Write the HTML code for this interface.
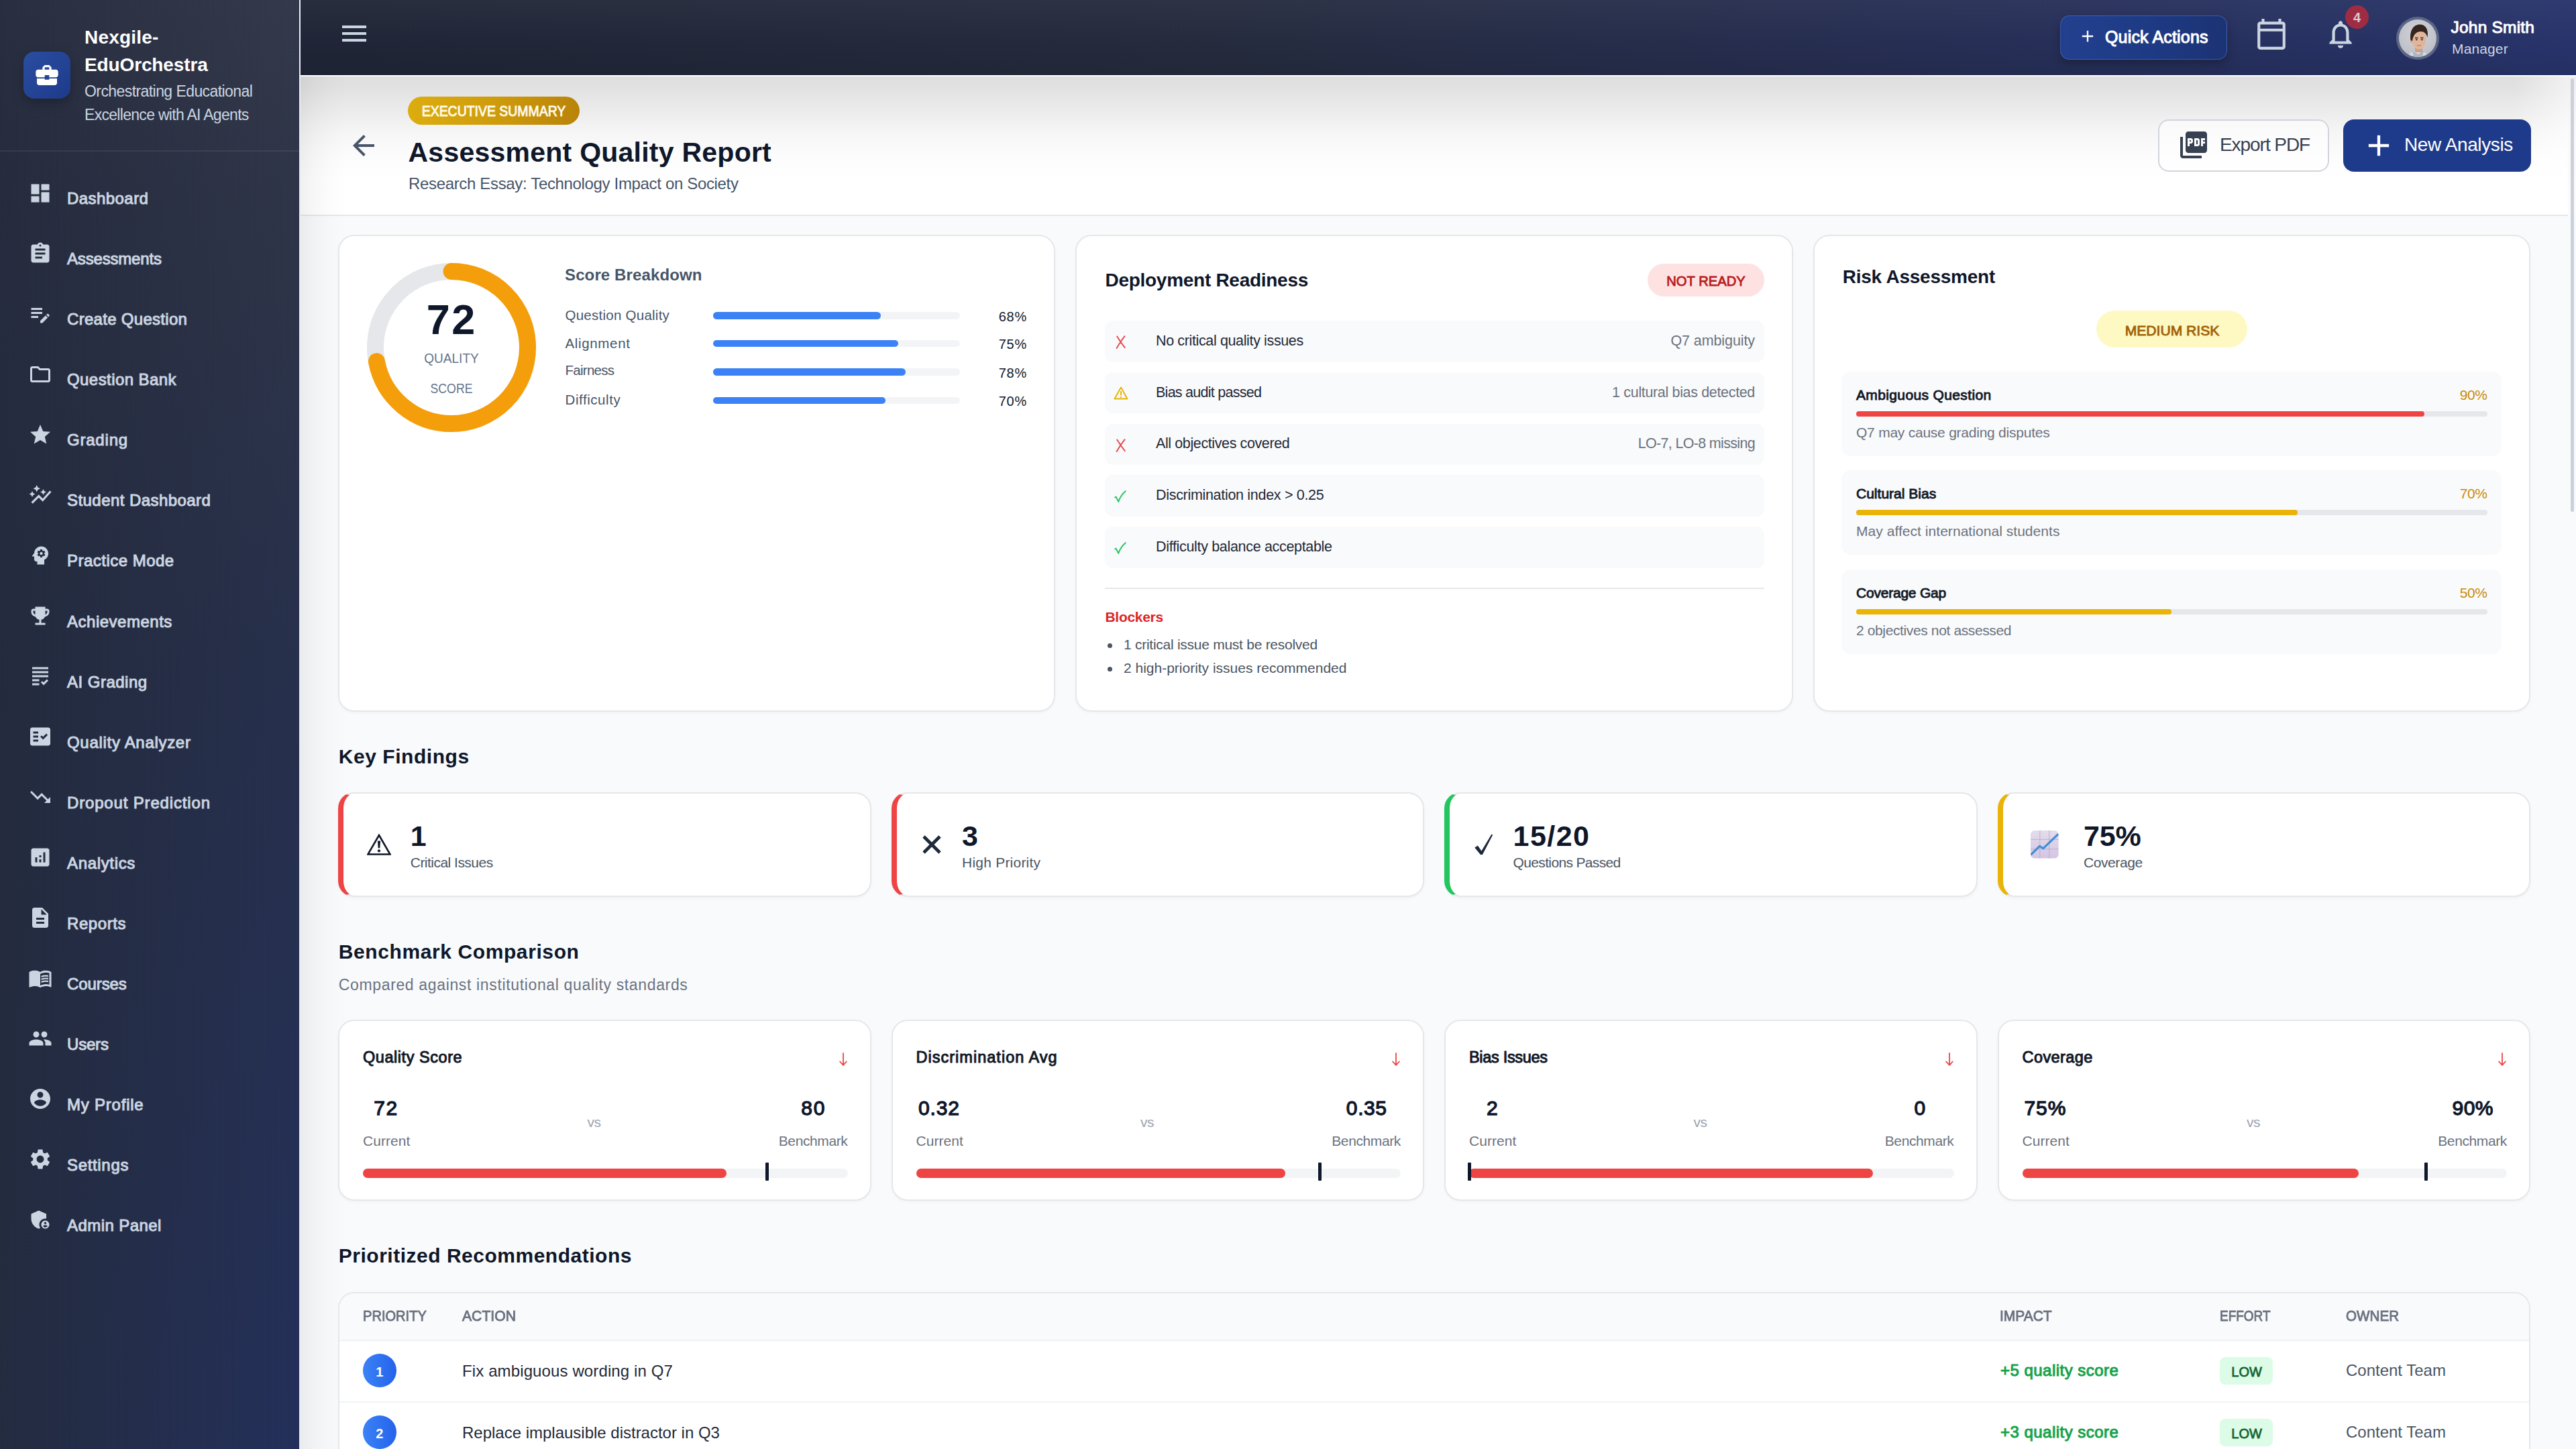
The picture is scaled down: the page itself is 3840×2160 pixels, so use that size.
<!DOCTYPE html><html><head><meta charset='utf-8'><title>Assessment Quality Report</title><style>
html,body{margin:0;padding:0;width:3840px;height:2160px;overflow:hidden;background:#f8fafc;}
body{position:relative;font-family:"Liberation Sans",sans-serif;}
.t{position:absolute;white-space:nowrap;line-height:1;}
.b{position:absolute;display:block;}
</style>
</head><body>
<div class="b" style="left:448.00px;top:114.00px;width:3380.00px;height:206.00px;background:#ffffff;"></div>
<div class="b" style="left:448.00px;top:320.00px;width:3380.00px;height:2.00px;background:#e5e7eb;"></div>
<div class="b" style="left:448.00px;top:114.00px;width:3380.00px;height:160.00px;background:linear-gradient(180deg,rgba(0,0,0,0.13) 0px,rgba(0,0,0,0.113) 19px,rgba(0,0,0,0.075) 52px,rgba(0,0,0,0.035) 85px,rgba(0,0,0,0.012) 118px,rgba(0,0,0,0) 155px);-webkit-mask-image:linear-gradient(90deg,#000 0px,#000 3300px,rgba(0,0,0,0.45) 3380px);mask-image:linear-gradient(90deg,#000 0px,#000 3300px,rgba(0,0,0,0.45) 3380px);"></div>
<div class="b" style="left:3828.00px;top:114.00px;width:12.00px;height:208.00px;background:linear-gradient(180deg,#efefef 0px,#f9f9f9 80px,#fbfbfb 208px);"></div>
<div class="b" style="left:448.00px;top:114.00px;width:70.00px;height:2046.00px;background:linear-gradient(90deg,rgba(0,0,0,0.06) 0px,rgba(0,0,0,0.03) 20px,rgba(0,0,0,0.01) 45px,rgba(0,0,0,0) 70px);"></div>
<svg class="b" style="left:518.00px;top:192.50px" width="48" height="48" viewBox="0 0 24 24"><path fill="#475569" d="M20 11H7.83l5.59-5.59L12 4l-8 8 8 8 1.41-1.41L7.83 13H20v-2z"/></svg>
<div class="b" style="left:608.00px;top:144.00px;width:256.00px;height:42.00px;border-radius:21px;background:linear-gradient(90deg,#dcad0e 0%,#cf9c0c 50%,#b98309 100%);"></div>
<div id="t1" class="t" style="top:156.30px;font-size:21.5px;font-weight:400;-webkit-text-stroke:0.90px #fffbeb;color:#fffbeb;left:736.00px;transform-origin:0 0;transform:scaleX(0.9040) translateX(-50%);">EXECUTIVE SUMMARY</div>
<div id="t2" class="t" style="top:207.29px;font-size:41px;font-weight:700;color:#0f172a;letter-spacing:0.243px;left:608.50px;">Assessment Quality Report</div>
<div id="t3" class="t" style="top:261.68px;font-size:24px;font-weight:400;color:#475569;letter-spacing:-0.339px;left:609.00px;">Research Essay: Technology Impact on Society</div>
<div class="b" style="left:3216.50px;top:178.00px;width:255.00px;height:78.00px;box-sizing:border-box;border-radius:16px;border:2px solid #d1d5db;background:rgba(255,255,255,0.6);"></div>
<svg class="b" style="left:3246.00px;top:191.75px" width="48" height="48" viewBox="0 0 24 24"><path fill="#374151" d="M20 2H8c-1.1 0-2 .9-2 2v12c0 1.1.9 2 2 2h12c1.1 0 2-.9 2-2V4c0-1.1-.9-2-2-2zm-8.5 7.5c0 .83-.67 1.5-1.5 1.5H9v2H7.5V7H10c.83 0 1.5.67 1.5 1.5v1zm5 2c0 .83-.67 1.5-1.5 1.5h-2.5V7H15c.83 0 1.5.67 1.5 1.5v3zm4-3H19v1h1.5V11H19v2h-1.5V7h3v1.5zM9 9.5h1v-1H9v1zM4 6H2v14c0 1.1.9 2 2 2h14v-2H4V6zm10 5.5h1v-3h-1v3z"/></svg>
<div id="t4" class="t" style="top:202.29px;font-size:28px;font-weight:400;color:#374151;letter-spacing:-1.053px;left:3309.00px;">Export PDF</div>
<div class="b" style="left:3493.00px;top:178.00px;width:280.00px;height:78.00px;border-radius:16px;background:#1e3a8a;"></div>
<svg class="b" style="left:3519.50px;top:190.50px" width="52" height="52" viewBox="0 0 24 24"><path fill="#ffffff" d="M19 13h-6v6h-2v-6H5v-2h6V5h2v6h6v2z"/></svg>
<div id="t5" class="t" style="top:202.29px;font-size:28px;font-weight:400;color:#ffffff;letter-spacing:-0.388px;left:3584.00px;">New Analysis</div>
<div class="b" style="left:504.00px;top:349.50px;width:1069.33px;height:711.00px;box-sizing:border-box;border-radius:24px;border:2px solid #e5e7eb;background:#ffffff;box-shadow:0 2px 4px rgba(0,0,0,0.03);"></div>
<div class="b" style="left:1603.33px;top:349.50px;width:1069.33px;height:711.00px;box-sizing:border-box;border-radius:24px;border:2px solid #e5e7eb;background:#ffffff;box-shadow:0 2px 4px rgba(0,0,0,0.03);"></div>
<div class="b" style="left:2702.67px;top:349.50px;width:1069.33px;height:711.00px;box-sizing:border-box;border-radius:24px;border:2px solid #e5e7eb;background:#ffffff;box-shadow:0 2px 4px rgba(0,0,0,0.03);"></div>
<svg class="b" style="left:547.25px;top:392.25px" width="252.00" height="252.00" viewBox="0 0 252.00 252.00">
<circle cx="126.00" cy="126.00" r="113.5" fill="none" stroke="#e5e7eb" stroke-width="25"/>
<circle cx="126.00" cy="126.00" r="113.5" fill="none" stroke="#f59e0b" stroke-width="25" stroke-linecap="round" stroke-dasharray="513.46 713.14" transform="rotate(-90 126.00 126.00)"/>
</svg>
<div id="t6" class="t" style="top:444.66px;font-size:63px;font-weight:700;color:#0f172a;letter-spacing:2.464px;left:673.25px;transform-origin:0 0;transform: translateX(-50%);">72</div>
<div id="t7" class="t" style="top:523.22px;font-size:21px;font-weight:400;color:#64748b;left:673.25px;transform-origin:0 0;transform:scaleX(0.9072) translateX(-50%);">QUALITY</div>
<div id="t8" class="t" style="top:568.22px;font-size:21px;font-weight:400;color:#64748b;left:673.25px;transform-origin:0 0;transform:scaleX(0.8424) translateX(-50%);">SCORE</div>
<div id="t9" class="t" style="top:397.68px;font-size:24px;font-weight:700;color:#475569;letter-spacing:0.120px;left:842.00px;">Score Breakdown</div>
<div id="t10" class="t" style="top:459.54px;font-size:20.5px;font-weight:400;color:#475569;letter-spacing:0.255px;left:842.50px;">Question Quality</div>
<div class="b" style="left:1062.50px;top:465.00px;width:368.00px;height:10.50px;border-radius:6px;background:#f3f4f6;"></div>
<div class="b" style="left:1062.50px;top:465.00px;width:250.24px;height:10.50px;border-radius:6px;background:#3b82f6;"></div>
<div id="t11" class="t" style="top:461.57px;font-size:20px;font-weight:400;color:#111827;letter-spacing:0.781px;left:1531.00px;transform-origin:0 0;transform: translateX(-100%);">68%</div>
<div id="t12" class="t" style="top:501.64px;font-size:20.5px;font-weight:400;color:#475569;letter-spacing:0.653px;left:842.50px;">Alignment</div>
<div class="b" style="left:1062.50px;top:506.50px;width:368.00px;height:10.50px;border-radius:6px;background:#f3f4f6;"></div>
<div class="b" style="left:1062.50px;top:506.50px;width:276.00px;height:10.50px;border-radius:6px;background:#3b82f6;"></div>
<div id="t13" class="t" style="top:503.07px;font-size:20px;font-weight:400;color:#111827;letter-spacing:0.781px;left:1531.00px;transform-origin:0 0;transform: translateX(-100%);">75%</div>
<div id="t14" class="t" style="top:542.39px;font-size:20.5px;font-weight:400;color:#475569;letter-spacing:-0.726px;left:842.50px;">Fairness</div>
<div class="b" style="left:1062.50px;top:549.00px;width:368.00px;height:10.50px;border-radius:6px;background:#f3f4f6;"></div>
<div class="b" style="left:1062.50px;top:549.00px;width:287.04px;height:10.50px;border-radius:6px;background:#3b82f6;"></div>
<div id="t15" class="t" style="top:545.57px;font-size:20px;font-weight:400;color:#111827;letter-spacing:0.781px;left:1531.00px;transform-origin:0 0;transform: translateX(-100%);">78%</div>
<div id="t16" class="t" style="top:585.64px;font-size:20.5px;font-weight:400;color:#475569;letter-spacing:0.572px;left:842.50px;">Difficulty</div>
<div class="b" style="left:1062.50px;top:591.50px;width:368.00px;height:10.50px;border-radius:6px;background:#f3f4f6;"></div>
<div class="b" style="left:1062.50px;top:591.50px;width:257.60px;height:10.50px;border-radius:6px;background:#3b82f6;"></div>
<div id="t17" class="t" style="top:588.07px;font-size:20px;font-weight:400;color:#111827;letter-spacing:0.781px;left:1531.00px;transform-origin:0 0;transform: translateX(-100%);">70%</div>
<div id="t18" class="t" style="top:404.29px;font-size:28px;font-weight:700;color:#0f172a;letter-spacing:-0.282px;left:1647.50px;">Deployment Readiness</div>
<div class="b" style="left:2456.00px;top:392.50px;width:174.00px;height:49.00px;border-radius:25px;background:#fee2e2;"></div>
<div id="t19" class="t" style="top:408.22px;font-size:21px;font-weight:400;-webkit-text-stroke:0.88px #b91c1c;color:#b91c1c;left:2543.00px;transform-origin:0 0;transform:scaleX(0.9630) translateX(-50%);">NOT READY</div>
<div class="b" style="left:1647.00px;top:478.00px;width:983.00px;height:61.50px;border-radius:12px;background:#f9fafb;"></div>
<svg class="b" style="left:1662.5px;top:500.0px" width="16" height="20" viewBox="0 0 16 20"><path d="M2.2 1.5 C5 6 9 12 13.8 18.2 M13.6 1.2 C9.5 6.5 5.5 12 1.6 19" fill="none" stroke="#e5484d" stroke-width="1.9" stroke-linecap="round"/></svg>
<div id="t20" class="t" style="top:497.80px;font-size:21.5px;font-weight:400;color:#1f2937;letter-spacing:-0.368px;left:1723.00px;">No critical quality issues</div>
<div id="t21" class="t" style="top:497.80px;font-size:21.5px;font-weight:400;color:#6b7280;letter-spacing:-0.088px;left:2616.00px;transform-origin:0 0;transform: translateX(-100%);">Q7 ambiguity</div>
<div class="b" style="left:1647.00px;top:554.75px;width:983.00px;height:61.50px;border-radius:12px;background:#f9fafb;"></div>
<svg class="b" style="left:1660px;top:576.0px" width="22" height="20" viewBox="0 0 22 20"><path d="M11 1.5 L20.5 18.5 L1.5 18.5 Z" fill="none" stroke="#eab308" stroke-width="2" stroke-linejoin="round"/><rect x="10" y="7" width="2" height="6.5" fill="#eab308"/><rect x="10" y="15" width="2" height="2" fill="#eab308"/></svg>
<div id="t22" class="t" style="top:574.55px;font-size:21.5px;font-weight:400;color:#1f2937;letter-spacing:-0.735px;left:1723.00px;">Bias audit passed</div>
<div id="t23" class="t" style="top:574.55px;font-size:21.5px;font-weight:400;color:#6b7280;letter-spacing:-0.343px;left:2616.00px;transform-origin:0 0;transform: translateX(-100%);">1 cultural bias detected</div>
<div class="b" style="left:1647.00px;top:631.50px;width:983.00px;height:61.50px;border-radius:12px;background:#f9fafb;"></div>
<svg class="b" style="left:1662.5px;top:653.5px" width="16" height="20" viewBox="0 0 16 20"><path d="M2.2 1.5 C5 6 9 12 13.8 18.2 M13.6 1.2 C9.5 6.5 5.5 12 1.6 19" fill="none" stroke="#e5484d" stroke-width="1.9" stroke-linecap="round"/></svg>
<div id="t24" class="t" style="top:651.30px;font-size:21.5px;font-weight:400;color:#1f2937;letter-spacing:-0.392px;left:1723.00px;">All objectives covered</div>
<div id="t25" class="t" style="top:651.30px;font-size:21.5px;font-weight:400;color:#6b7280;letter-spacing:-0.672px;left:2616.00px;transform-origin:0 0;transform: translateX(-100%);">LO-7, LO-8 missing</div>
<div class="b" style="left:1647.00px;top:708.25px;width:983.00px;height:61.50px;border-radius:12px;background:#f9fafb;"></div>
<svg class="b" style="left:1661px;top:730.75px" width="18" height="19" viewBox="0 0 18 19"><path d="M1.2 10.5 L2.6 9.6 L6.2 16.8 C8.5 10.5 12 5 16.8 1.2" fill="none" stroke="#22c55e" stroke-width="1.9" stroke-linecap="round" stroke-linejoin="round"/></svg>
<div id="t26" class="t" style="top:728.05px;font-size:21.5px;font-weight:400;color:#1f2937;letter-spacing:-0.308px;left:1723.00px;">Discrimination index &gt; 0.25</div>
<div class="b" style="left:1647.00px;top:785.00px;width:983.00px;height:61.50px;border-radius:12px;background:#f9fafb;"></div>
<svg class="b" style="left:1661px;top:807.5px" width="18" height="19" viewBox="0 0 18 19"><path d="M1.2 10.5 L2.6 9.6 L6.2 16.8 C8.5 10.5 12 5 16.8 1.2" fill="none" stroke="#22c55e" stroke-width="1.9" stroke-linecap="round" stroke-linejoin="round"/></svg>
<div id="t27" class="t" style="top:804.80px;font-size:21.5px;font-weight:400;color:#1f2937;letter-spacing:-0.326px;left:1723.00px;">Difficulty balance acceptable</div>
<div class="b" style="left:1647.00px;top:875.50px;width:983.00px;height:2.00px;background:#e5e7eb;"></div>
<div id="t28" class="t" style="top:909.22px;font-size:21px;font-weight:700;color:#dc2626;letter-spacing:-0.291px;left:1647.50px;">Blockers</div>
<div class="b" style="left:1650.50px;top:958.80px;width:7.00px;height:7.00px;border-radius:50%;background:#4b5563;"></div>
<div class="b" style="left:1650.50px;top:994.00px;width:7.00px;height:7.00px;border-radius:50%;background:#4b5563;"></div>
<div id="t29" class="t" style="top:949.72px;font-size:21px;font-weight:400;color:#4b5563;letter-spacing:-0.264px;left:1675.00px;">1 critical issue must be resolved</div>
<div id="t30" class="t" style="top:985.22px;font-size:21px;font-weight:400;color:#4b5563;letter-spacing:-0.007px;left:1675.00px;">2 high-priority issues recommended</div>
<div id="t31" class="t" style="top:399.29px;font-size:28px;font-weight:700;color:#0f172a;letter-spacing:-0.241px;left:2746.75px;">Risk Assessment</div>
<div class="b" style="left:3125.00px;top:463.00px;width:225.00px;height:55.00px;border-radius:28px;background:#fef9c3;"></div>
<div id="t32" class="t" style="top:482.22px;font-size:21px;font-weight:400;-webkit-text-stroke:0.88px #a16207;color:#a16207;left:3237.50px;transform-origin:0 0;transform:scaleX(1.0048) translateX(-50%);">MEDIUM RISK</div>
<div class="b" style="left:2745.00px;top:554.00px;width:984.00px;height:126.00px;border-radius:14px;background:#f9fafb;"></div>
<div id="t33" class="t" style="top:577.97px;font-size:21px;font-weight:400;-webkit-text-stroke:0.88px #111827;color:#111827;letter-spacing:0.366px;left:2767.00px;">Ambiguous Question</div>
<div id="t34" class="t" style="top:577.97px;font-size:21px;font-weight:400;color:#ca8a04;letter-spacing:-0.377px;left:3707.60px;transform-origin:0 0;transform: translateX(-100%);">90%</div>
<div class="b" style="left:2767.00px;top:613.00px;width:940.60px;height:8.00px;border-radius:4px;background:#e5e7eb;"></div>
<div class="b" style="left:2767.00px;top:613.00px;width:846.54px;height:8.00px;border-radius:4px;background:#ef4444;"></div>
<div id="t35" class="t" style="top:633.97px;font-size:21px;font-weight:400;color:#6b7280;letter-spacing:-0.238px;left:2767.00px;">Q7 may cause grading disputes</div>
<div class="b" style="left:2745.00px;top:701.30px;width:984.00px;height:126.00px;border-radius:14px;background:#f9fafb;"></div>
<div id="t36" class="t" style="top:725.27px;font-size:21px;font-weight:400;-webkit-text-stroke:0.88px #111827;color:#111827;letter-spacing:0.010px;left:2767.00px;">Cultural Bias</div>
<div id="t37" class="t" style="top:725.27px;font-size:21px;font-weight:400;color:#ca8a04;letter-spacing:-0.377px;left:3707.60px;transform-origin:0 0;transform: translateX(-100%);">70%</div>
<div class="b" style="left:2767.00px;top:760.30px;width:940.60px;height:8.00px;border-radius:4px;background:#e5e7eb;"></div>
<div class="b" style="left:2767.00px;top:760.30px;width:658.42px;height:8.00px;border-radius:4px;background:#eab308;"></div>
<div id="t38" class="t" style="top:781.27px;font-size:21px;font-weight:400;color:#6b7280;letter-spacing:0.046px;left:2767.00px;">May affect international students</div>
<div class="b" style="left:2745.00px;top:848.60px;width:984.00px;height:126.00px;border-radius:14px;background:#f9fafb;"></div>
<div id="t39" class="t" style="top:872.57px;font-size:21px;font-weight:400;-webkit-text-stroke:0.88px #111827;color:#111827;letter-spacing:-0.220px;left:2767.00px;">Coverage Gap</div>
<div id="t40" class="t" style="top:872.57px;font-size:21px;font-weight:400;color:#ca8a04;letter-spacing:-0.377px;left:3707.60px;transform-origin:0 0;transform: translateX(-100%);">50%</div>
<div class="b" style="left:2767.00px;top:907.60px;width:940.60px;height:8.00px;border-radius:4px;background:#e5e7eb;"></div>
<div class="b" style="left:2767.00px;top:907.60px;width:470.30px;height:8.00px;border-radius:4px;background:#eab308;"></div>
<div id="t41" class="t" style="top:928.57px;font-size:21px;font-weight:400;color:#6b7280;letter-spacing:-0.375px;left:2767.00px;">2 objectives not assessed</div>
<div id="t42" class="t" style="top:1112.60px;font-size:30px;font-weight:700;color:#0f172a;letter-spacing:0.549px;left:504.75px;">Key Findings</div>
<div class="b" style="left:504.00px;top:1180.50px;width:794.50px;height:156.00px;box-sizing:border-box;border-radius:24px;border:2px solid #e5e7eb;border-left:8px solid #ef4444;background:#ffffff;box-shadow:0 2px 4px rgba(0,0,0,0.04);"></div>
<div id="t43" class="t" style="top:1224.99px;font-size:43px;font-weight:700;color:#0f172a;left:611.75px;">1</div>
<div id="t44" class="t" style="top:1274.72px;font-size:21px;font-weight:400;color:#4b5563;letter-spacing:-0.520px;left:611.75px;">Critical Issues</div>
<div class="b" style="left:1328.50px;top:1180.50px;width:794.50px;height:156.00px;box-sizing:border-box;border-radius:24px;border:2px solid #e5e7eb;border-left:8px solid #ef4444;background:#ffffff;box-shadow:0 2px 4px rgba(0,0,0,0.04);"></div>
<div id="t45" class="t" style="top:1224.99px;font-size:43px;font-weight:700;color:#0f172a;left:1434.00px;">3</div>
<div id="t46" class="t" style="top:1274.72px;font-size:21px;font-weight:400;color:#4b5563;letter-spacing:0.226px;left:1434.00px;">High Priority</div>
<div class="b" style="left:2153.00px;top:1180.50px;width:794.50px;height:156.00px;box-sizing:border-box;border-radius:24px;border:2px solid #e5e7eb;border-left:8px solid #22c55e;background:#ffffff;box-shadow:0 2px 4px rgba(0,0,0,0.04);"></div>
<div id="t47" class="t" style="top:1224.99px;font-size:43px;font-weight:700;color:#0f172a;letter-spacing:1.456px;left:2255.60px;">15/20</div>
<div id="t48" class="t" style="top:1274.72px;font-size:21px;font-weight:400;color:#4b5563;letter-spacing:-0.650px;left:2255.60px;">Questions Passed</div>
<div class="b" style="left:2977.50px;top:1180.50px;width:794.50px;height:156.00px;box-sizing:border-box;border-radius:24px;border:2px solid #e5e7eb;border-left:8px solid #eab308;background:#ffffff;box-shadow:0 2px 4px rgba(0,0,0,0.04);"></div>
<div id="t49" class="t" style="top:1224.99px;font-size:43px;font-weight:700;color:#0f172a;letter-spacing:-0.212px;left:3106.00px;">75%</div>
<div id="t50" class="t" style="top:1274.72px;font-size:21px;font-weight:400;color:#4b5563;letter-spacing:-0.426px;left:3106.00px;">Coverage</div>
<svg class="b" style="left:547px;top:1243px" width="36" height="32" viewBox="0 0 36 32"><path d="M18 2 L34.5 30.5 L1.5 30.5 Z" fill="none" stroke="#111827" stroke-width="2.6" stroke-linejoin="miter"/><path d="M15.9 10.5 h4.2 l-0.8 10.8 h-2.6 Z" fill="#111827"/><circle cx="18" cy="25.3" r="2.1" fill="#111827"/></svg>
<svg class="b" style="left:1373.5px;top:1244px" width="30" height="30" viewBox="0 0 30 30"><path d="M3 3 L27 27 M27 3 L3 27" stroke="#1e293b" stroke-width="4.8" stroke-linecap="butt"/></svg>
<svg class="b" style="left:2197.8px;top:1242.7px" width="27.2" height="31.7" viewBox="0 0 27.2 31.7"><path d="M0.3 20.6 L4.9 17.4 L10.4 25.6 L25.5 0.4 L27.2 1.7 L11.6 31.6 L9.4 31.6 Z" fill="#1e293b"/></svg>
<svg class="b" style="left:3027.4px;top:1238px" width="41.6" height="41.6" viewBox="0 0 42 42">
<defs><linearGradient id="cg" x1="0" y1="0" x2="0" y2="1"><stop offset="0" stop-color="#e4dcec"/><stop offset="1" stop-color="#d3c6e3"/></linearGradient></defs>
<rect x="0" y="0" width="42" height="42" rx="6" fill="url(#cg)"/>
<path d="M14 0 V42 M28 0 V42 M0 13.5 H42 M0 28 H42" stroke="#b9abc9" stroke-width="0.9"/>
<path d="M0.5 36.5 L13.5 23.5 L19 27 L41.5 5.5" fill="none" stroke="#3f8fd6" stroke-width="3.2" stroke-linejoin="round"/>
</svg>
<div id="t51" class="t" style="top:1403.60px;font-size:30px;font-weight:700;color:#0f172a;letter-spacing:0.599px;left:504.75px;">Benchmark Comparison</div>
<div id="t52" class="t" style="top:1456.78px;font-size:23px;font-weight:400;color:#6b7280;letter-spacing:0.647px;left:504.75px;">Compared against institutional quality standards</div>
<div class="b" style="left:504.00px;top:1519.50px;width:794.50px;height:270.00px;box-sizing:border-box;border-radius:24px;border:2px solid #e5e7eb;background:#ffffff;box-shadow:0 2px 4px rgba(0,0,0,0.03);"></div>
<div id="t53" class="t" style="top:1564.60px;font-size:23.5px;font-weight:400;-webkit-text-stroke:0.99px #111827;color:#111827;letter-spacing:0.547px;left:541.00px;">Quality Score</div>
<svg class="b" style="left:1249.5px;top:1568.5px" width="14" height="20" viewBox="0 0 14 20"><path d="M7 1 V18.5 M2.2 13.5 L7 18.8 L11.8 13.5" fill="none" stroke="#ef4444" stroke-width="1.8" stroke-linecap="round" stroke-linejoin="round"/></svg>
<div id="t54" class="t" style="top:1690.22px;font-size:21px;font-weight:400;color:#6b7280;letter-spacing:0.065px;left:541.00px;">Current</div>
<div id="t55" class="t" style="top:1690.22px;font-size:21px;font-weight:400;color:#6b7280;letter-spacing:-0.380px;left:1263.50px;transform-origin:0 0;transform: translateX(-100%);">Benchmark</div>
<div id="t56" class="t" style="top:1637.10px;font-size:30px;font-weight:400;-webkit-text-stroke:1.26px #0f172a;color:#0f172a;letter-spacing:1.528px;left:575.40px;transform-origin:0 0;transform: translateX(-50%);">72</div>
<div id="t57" class="t" style="top:1637.10px;font-size:30px;font-weight:400;-webkit-text-stroke:1.26px #0f172a;color:#0f172a;letter-spacing:1.722px;left:1212.75px;transform-origin:0 0;transform: translateX(-50%);">80</div>
<div id="t58" class="t" style="top:1662.22px;font-size:21px;font-weight:400;color:#9ca3af;letter-spacing:-0.585px;left:885.40px;transform-origin:0 0;transform: translateX(-50%);">vs</div>
<div class="b" style="left:541.00px;top:1741.50px;width:722.50px;height:14.00px;border-radius:7px;background:#f3f4f6;"></div>
<div class="b" style="left:541.00px;top:1741.50px;width:541.88px;height:14.00px;border-radius:7px;background:#ef4444;"></div>
<div class="b" style="left:1140.56px;top:1733.00px;width:5.00px;height:27.00px;background:#0f172a;border-radius:1px;"></div>
<div class="b" style="left:1328.50px;top:1519.50px;width:794.50px;height:270.00px;box-sizing:border-box;border-radius:24px;border:2px solid #e5e7eb;background:#ffffff;box-shadow:0 2px 4px rgba(0,0,0,0.03);"></div>
<div id="t59" class="t" style="top:1564.60px;font-size:23.5px;font-weight:400;-webkit-text-stroke:0.99px #111827;color:#111827;letter-spacing:1.018px;left:1365.50px;">Discrimination Avg</div>
<svg class="b" style="left:2074.0px;top:1568.5px" width="14" height="20" viewBox="0 0 14 20"><path d="M7 1 V18.5 M2.2 13.5 L7 18.8 L11.8 13.5" fill="none" stroke="#ef4444" stroke-width="1.8" stroke-linecap="round" stroke-linejoin="round"/></svg>
<div id="t60" class="t" style="top:1690.22px;font-size:21px;font-weight:400;color:#6b7280;letter-spacing:0.065px;left:1365.50px;">Current</div>
<div id="t61" class="t" style="top:1690.22px;font-size:21px;font-weight:400;color:#6b7280;letter-spacing:-0.380px;left:2088.00px;transform-origin:0 0;transform: translateX(-100%);">Benchmark</div>
<div id="t62" class="t" style="top:1637.10px;font-size:30px;font-weight:400;-webkit-text-stroke:1.26px #0f172a;color:#0f172a;letter-spacing:0.899px;left:1399.90px;transform-origin:0 0;transform: translateX(-50%);">0.32</div>
<div id="t63" class="t" style="top:1637.10px;font-size:30px;font-weight:400;-webkit-text-stroke:1.26px #0f172a;color:#0f172a;letter-spacing:0.600px;left:2037.25px;transform-origin:0 0;transform: translateX(-50%);">0.35</div>
<div id="t64" class="t" style="top:1662.22px;font-size:21px;font-weight:400;color:#9ca3af;letter-spacing:-0.585px;left:1709.90px;transform-origin:0 0;transform: translateX(-50%);">vs</div>
<div class="b" style="left:1365.50px;top:1741.50px;width:722.50px;height:14.00px;border-radius:7px;background:#f3f4f6;"></div>
<div class="b" style="left:1365.50px;top:1741.50px;width:550.54px;height:14.00px;border-radius:7px;background:#ef4444;"></div>
<div class="b" style="left:1965.06px;top:1733.00px;width:5.00px;height:27.00px;background:#0f172a;border-radius:1px;"></div>
<div class="b" style="left:2153.00px;top:1519.50px;width:794.50px;height:270.00px;box-sizing:border-box;border-radius:24px;border:2px solid #e5e7eb;background:#ffffff;box-shadow:0 2px 4px rgba(0,0,0,0.03);"></div>
<div id="t65" class="t" style="top:1564.60px;font-size:23.5px;font-weight:400;-webkit-text-stroke:0.99px #111827;color:#111827;letter-spacing:-0.308px;left:2190.00px;">Bias Issues</div>
<svg class="b" style="left:2898.5px;top:1568.5px" width="14" height="20" viewBox="0 0 14 20"><path d="M7 1 V18.5 M2.2 13.5 L7 18.8 L11.8 13.5" fill="none" stroke="#ef4444" stroke-width="1.8" stroke-linecap="round" stroke-linejoin="round"/></svg>
<div id="t66" class="t" style="top:1690.22px;font-size:21px;font-weight:400;color:#6b7280;letter-spacing:0.065px;left:2190.00px;">Current</div>
<div id="t67" class="t" style="top:1690.22px;font-size:21px;font-weight:400;color:#6b7280;letter-spacing:-0.380px;left:2912.50px;transform-origin:0 0;transform: translateX(-100%);">Benchmark</div>
<div id="t68" class="t" style="top:1637.10px;font-size:30px;font-weight:400;-webkit-text-stroke:1.26px #0f172a;color:#0f172a;left:2224.40px;transform-origin:0 0;transform: translateX(-50%);">2</div>
<div id="t69" class="t" style="top:1637.10px;font-size:30px;font-weight:400;-webkit-text-stroke:1.26px #0f172a;color:#0f172a;left:2861.75px;transform-origin:0 0;transform: translateX(-50%);">0</div>
<div id="t70" class="t" style="top:1662.22px;font-size:21px;font-weight:400;color:#9ca3af;letter-spacing:-0.585px;left:2534.40px;transform-origin:0 0;transform: translateX(-50%);">vs</div>
<div class="b" style="left:2190.00px;top:1741.50px;width:722.50px;height:14.00px;border-radius:7px;background:#f3f4f6;"></div>
<div class="b" style="left:2190.00px;top:1741.50px;width:602.06px;height:14.00px;border-radius:7px;background:#ef4444;"></div>
<div class="b" style="left:2187.50px;top:1733.00px;width:5.00px;height:27.00px;background:#0f172a;border-radius:1px;"></div>
<div class="b" style="left:2977.50px;top:1519.50px;width:794.50px;height:270.00px;box-sizing:border-box;border-radius:24px;border:2px solid #e5e7eb;background:#ffffff;box-shadow:0 2px 4px rgba(0,0,0,0.03);"></div>
<div id="t71" class="t" style="top:1564.60px;font-size:23.5px;font-weight:400;-webkit-text-stroke:0.99px #111827;color:#111827;letter-spacing:0.426px;left:3014.50px;">Coverage</div>
<svg class="b" style="left:3723.0px;top:1568.5px" width="14" height="20" viewBox="0 0 14 20"><path d="M7 1 V18.5 M2.2 13.5 L7 18.8 L11.8 13.5" fill="none" stroke="#ef4444" stroke-width="1.8" stroke-linecap="round" stroke-linejoin="round"/></svg>
<div id="t72" class="t" style="top:1690.22px;font-size:21px;font-weight:400;color:#6b7280;letter-spacing:0.065px;left:3014.50px;">Current</div>
<div id="t73" class="t" style="top:1690.22px;font-size:21px;font-weight:400;color:#6b7280;letter-spacing:-0.380px;left:3737.00px;transform-origin:0 0;transform: translateX(-100%);">Benchmark</div>
<div id="t74" class="t" style="top:1637.10px;font-size:30px;font-weight:400;-webkit-text-stroke:1.26px #0f172a;color:#0f172a;letter-spacing:0.926px;left:3048.90px;transform-origin:0 0;transform: translateX(-50%);">75%</div>
<div id="t75" class="t" style="top:1637.10px;font-size:30px;font-weight:400;-webkit-text-stroke:1.26px #0f172a;color:#0f172a;letter-spacing:0.528px;left:3686.25px;transform-origin:0 0;transform: translateX(-50%);">90%</div>
<div id="t76" class="t" style="top:1662.22px;font-size:21px;font-weight:400;color:#9ca3af;letter-spacing:-0.585px;left:3358.90px;transform-origin:0 0;transform: translateX(-50%);">vs</div>
<div class="b" style="left:3014.50px;top:1741.50px;width:722.50px;height:14.00px;border-radius:7px;background:#f3f4f6;"></div>
<div class="b" style="left:3014.50px;top:1741.50px;width:501.41px;height:14.00px;border-radius:7px;background:#ef4444;"></div>
<div class="b" style="left:3614.06px;top:1733.00px;width:5.00px;height:27.00px;background:#0f172a;border-radius:1px;"></div>
<div id="t77" class="t" style="top:1857.10px;font-size:30px;font-weight:700;color:#0f172a;letter-spacing:0.509px;left:504.75px;">Prioritized Recommendations</div>
<div class="b" style="left:504.00px;top:1925.75px;width:3268.00px;height:234.25px;box-sizing:border-box;border-radius:24px 24px 0 0;border:2px solid #e5e7eb;border-bottom:none;background:#ffffff;"></div>
<div class="b" style="left:506.00px;top:1927.75px;width:3264.00px;height:69.50px;border-radius:22px 22px 0 0;background:#f9fafb;"></div>
<div class="b" style="left:506.00px;top:1997.00px;width:3264.00px;height:2.00px;background:#eef0f3;"></div>
<div id="t78" class="t" style="top:1951.80px;font-size:21.5px;font-weight:400;-webkit-text-stroke:0.90px #6b7280;color:#6b7280;left:541.00px;transform-origin:0 0;transform:scaleX(0.9341);">PRIORITY</div>
<div id="t79" class="t" style="top:1951.80px;font-size:21.5px;font-weight:400;-webkit-text-stroke:0.90px #6b7280;color:#6b7280;left:689.00px;transform-origin:0 0;transform:scaleX(0.9841);">ACTION</div>
<div id="t80" class="t" style="top:1951.80px;font-size:21.5px;font-weight:400;-webkit-text-stroke:0.90px #6b7280;color:#6b7280;left:2981.00px;transform-origin:0 0;transform:scaleX(0.9754);">IMPACT</div>
<div id="t81" class="t" style="top:1951.80px;font-size:21.5px;font-weight:400;-webkit-text-stroke:0.90px #6b7280;color:#6b7280;left:3309.00px;transform-origin:0 0;transform:scaleX(0.8821);">EFFORT</div>
<div id="t82" class="t" style="top:1951.80px;font-size:21.5px;font-weight:400;-webkit-text-stroke:0.90px #6b7280;color:#6b7280;left:3497.00px;transform-origin:0 0;transform:scaleX(0.9591);">OWNER</div>
<div class="b" style="left:541.00px;top:2018.00px;width:49.50px;height:49.50px;border-radius:50%;background:linear-gradient(90deg,#3b82f6 0%,#2563eb 100%);"></div>
<div id="t83" class="t" style="top:2035.07px;font-size:20px;font-weight:700;color:#ffffff;left:565.75px;transform-origin:0 0;transform: translateX(-50%);">1</div>
<div id="t84" class="t" style="top:2032.18px;font-size:24px;font-weight:400;color:#1f2937;letter-spacing:0.119px;left:689.00px;">Fix ambiguous wording in Q7</div>
<div id="t85" class="t" style="top:2030.68px;font-size:24px;font-weight:400;-webkit-text-stroke:1.01px #16a34a;color:#16a34a;letter-spacing:0.476px;left:2982.00px;">+5 quality score</div>
<div class="b" style="left:3309.00px;top:2023.00px;width:79.00px;height:40.50px;border-radius:8px;background:#dcfce7;"></div>
<div id="t86" class="t" style="top:2034.64px;font-size:20.5px;font-weight:400;-webkit-text-stroke:0.86px #166534;color:#166534;left:3349.30px;transform-origin:0 0;transform:scaleX(0.9720) translateX(-50%);">LOW</div>
<div id="t87" class="t" style="top:2030.68px;font-size:24px;font-weight:400;color:#4b5563;letter-spacing:-0.007px;left:3497.00px;">Content Team</div>
<div class="b" style="left:506.00px;top:2088.50px;width:3264.00px;height:2.00px;background:#f1f3f5;"></div>
<div class="b" style="left:541.00px;top:2110.25px;width:49.50px;height:49.50px;border-radius:50%;background:linear-gradient(90deg,#3b82f6 0%,#2563eb 100%);"></div>
<div id="t88" class="t" style="top:2127.32px;font-size:20px;font-weight:700;color:#ffffff;left:565.75px;transform-origin:0 0;transform: translateX(-50%);">2</div>
<div id="t89" class="t" style="top:2124.43px;font-size:24px;font-weight:400;color:#1f2937;letter-spacing:-0.007px;left:689.00px;">Replace implausible distractor in Q3</div>
<div id="t90" class="t" style="top:2122.93px;font-size:24px;font-weight:400;-webkit-text-stroke:1.01px #16a34a;color:#16a34a;letter-spacing:0.476px;left:2982.00px;">+3 quality score</div>
<div class="b" style="left:3309.00px;top:2115.25px;width:79.00px;height:40.50px;border-radius:8px;background:#dcfce7;"></div>
<div id="t91" class="t" style="top:2126.89px;font-size:20.5px;font-weight:400;-webkit-text-stroke:0.86px #166534;color:#166534;left:3349.30px;transform-origin:0 0;transform:scaleX(0.9720) translateX(-50%);">LOW</div>
<div id="t92" class="t" style="top:2122.93px;font-size:24px;font-weight:400;color:#4b5563;letter-spacing:-0.007px;left:3497.00px;">Content Team</div>
<div class="b" style="left:3831.50px;top:117.00px;width:5.50px;height:645.50px;border-radius:3px;background:#cbd1dc;"></div>
<div class="b" style="left:0.00px;top:0.00px;width:446.00px;height:2160.00px;background:linear-gradient(180deg,#292f41 0px,#262c3e 300px,#242b3e 1000px,#242c40 2160px);"></div>
<div class="b" style="left:0.00px;top:0.00px;width:446.00px;height:2160.00px;background:linear-gradient(180deg,#343a4b 0px,#2f3548 300px,#27304c 1000px,#24305a 2160px);-webkit-mask-image:linear-gradient(90deg,rgba(0,0,0,0) 0%,rgba(0,0,0,1) 100%);mask-image:linear-gradient(90deg,rgba(0,0,0,0) 0%,rgba(0,0,0,1) 100%);"></div>
<div class="b" style="left:0.00px;top:224.00px;width:446.00px;height:2.00px;background:rgba(255,255,255,0.07);"></div>
<div class="b" style="left:446.00px;top:0.00px;width:2.00px;height:2160.00px;background:#e9edf5;"></div>
<div class="b" style="left:35.00px;top:77.00px;width:70.00px;height:70.00px;border-radius:16px;background:linear-gradient(135deg,#2a4ea0 0%,#1e3a8a 100%);box-shadow:0 6px 16px rgba(0,0,0,0.25);"></div>
<svg class="b" style="left:50.00px;top:92.00px" width="40" height="40" viewBox="0 0 24 24"><path fill="#ffffff" d="M10 16v-1H3.01L3 19c0 1.11.89 2 2 2h14c1.11 0 2-.89 2-2v-4h-7v1h-4zm10-9h-4.01V5l-2-2h-4l-2 2v2H4c-1.1 0-2 .9-2 2v3c0 1.11.89 2 2 2h6v-2h4v2h6c1.1 0 2-.9 2-2V9c0-1.1-.9-2-2-2zm-6 0h-4V5h4v2z"/></svg>
<div id="t93" class="t" style="top:42.29px;font-size:28px;font-weight:700;color:#ffffff;letter-spacing:0.187px;left:126.00px;">Nexgile-</div>
<div id="t94" class="t" style="top:83.29px;font-size:28px;font-weight:700;color:#ffffff;letter-spacing:-0.131px;left:126.00px;">EduOrchestra</div>
<div id="t95" class="t" style="top:124.78px;font-size:23px;font-weight:400;color:#cbd5e1;letter-spacing:-0.575px;left:126.00px;">Orchestrating Educational</div>
<div id="t96" class="t" style="top:159.78px;font-size:23px;font-weight:400;color:#cbd5e1;letter-spacing:-0.698px;left:126.00px;">Excellence with AI Agents</div>
<svg class="b" style="left:41.50px;top:270.25px" width="36" height="36" viewBox="0 0 24 24"><path fill="#cbd5e1" d="M3 13h8V3H3v10zm0 8h8v-6H3v6zm10 0h8V11h-8v10zm0-18v6h8V3h-8z"/></svg>
<div id="t97" class="t" style="top:284.43px;font-size:24px;font-weight:400;-webkit-text-stroke:1.01px #cbd5e1;color:#cbd5e1;letter-spacing:0.439px;left:100.00px;">Dashboard</div>
<svg class="b" style="left:41.50px;top:360.26px" width="36" height="36" viewBox="0 0 24 24"><path fill="#cbd5e1" d="M19 3h-4.18C14.4 1.84 13.3 1 12 1c-1.3 0-2.4.84-2.82 2H5c-1.1 0-2 .9-2 2v14c0 1.1.9 2 2 2h14c1.1 0 2-.9 2-2V5c0-1.1-.9-2-2-2zm-7 0c.55 0 1 .45 1 1s-.45 1-1 1-1-.45-1-1 .45-1 1-1zm2 14H7v-2h7v2zm3-4H7v-2h10v2zm0-4H7V7h10v2z"/></svg>
<div id="t98" class="t" style="top:374.44px;font-size:24px;font-weight:400;-webkit-text-stroke:1.01px #cbd5e1;color:#cbd5e1;letter-spacing:-0.179px;left:100.00px;">Assessments</div>
<svg class="b" style="left:41.50px;top:450.27px" width="36" height="36" viewBox="0 0 24 24"><path fill="#cbd5e1" d="M3 10h11v2H3v-2zm0-2h11V6H3v2zm0 8h7v-2H3v2zm15.01-3.13l.71-.71c.39-.39 1.02-.39 1.41 0l.71.71c.39.39.39 1.02 0 1.41l-.71.71-2.12-2.12zm-.71.71l-5.3 5.3V21h2.12l5.3-5.3-2.12-2.12z"/></svg>
<div id="t99" class="t" style="top:464.45px;font-size:24px;font-weight:400;-webkit-text-stroke:1.01px #cbd5e1;color:#cbd5e1;letter-spacing:0.297px;left:100.00px;">Create Question</div>
<svg class="b" style="left:41.50px;top:540.28px" width="36" height="36" viewBox="0 0 24 24"><path fill="#cbd5e1" d="M9.17 6l2 2H20v10H4V6h5.17M10 4H4c-1.1 0-1.99.9-1.99 2L2 18c0 1.1.9 2 2 2h16c1.1 0 2-.9 2-2V8c0-1.1-.9-2-2-2h-8l-2-2z"/></svg>
<div id="t100" class="t" style="top:554.46px;font-size:24px;font-weight:400;-webkit-text-stroke:1.01px #cbd5e1;color:#cbd5e1;letter-spacing:0.423px;left:100.00px;">Question Bank</div>
<svg class="b" style="left:41.50px;top:630.29px" width="36" height="36" viewBox="0 0 24 24"><path fill="#cbd5e1" d="M12 17.27L18.18 21l-1.64-7.03L22 9.24l-7.19-.61L12 2 9.19 8.63 2 9.24l5.46 4.73L5.82 21z"/></svg>
<div id="t101" class="t" style="top:644.47px;font-size:24px;font-weight:400;-webkit-text-stroke:1.01px #cbd5e1;color:#cbd5e1;letter-spacing:0.788px;left:100.00px;">Grading</div>
<svg class="b" style="left:41.50px;top:720.30px" width="36" height="36" viewBox="0 0 24 24"><path fill="#cbd5e1" d="M14.06 9.94L12 9l2.06-.94L15 6l.94 2.06L18 9l-2.06.94L15 12l-.94-2.06zM4 14l.94-2.06L7 11l-2.06-.94L4 8l-.94 2.06L1 11l2.06.94L4 14zm4.5-5l1.09-2.41L12 5.5 9.59 4.41 8.5 2 7.41 4.41 5 5.5l2.41 1.09L8.5 9zm-4 11.5l6-6.01 4 4L23 8.93l-1.41-1.41-7.09 7.97-4-4L3 19l1.5 1.5z"/></svg>
<div id="t102" class="t" style="top:734.48px;font-size:24px;font-weight:400;-webkit-text-stroke:1.01px #cbd5e1;color:#cbd5e1;letter-spacing:0.443px;left:100.00px;">Student Dashboard</div>
<svg class="b" style="left:41.50px;top:810.31px" width="36" height="36" viewBox="0 0 24 24"><path fill="#cbd5e1" d="M13 8.57c-.79 0-1.43.64-1.43 1.43s.64 1.43 1.43 1.43 1.43-.64 1.43-1.43-.64-1.43-1.43-1.43zM13 3C9.25 3 6.2 5.94 6.02 9.64L4.1 12.2c-.25.33-.01.8.4.8H6v3c0 1.1.9 2 2 2h1v3h7v-4.68c2.36-1.12 4-3.53 4-6.32 0-3.87-3.13-7-7-7zm3 7c0 .13-.01.26-.02.39l.83.66c.08.06.1.16.05.25l-.8 1.39c-.05.09-.16.12-.24.09l-.99-.4c-.21.16-.43.29-.67.39L14 13.83c-.01.1-.1.17-.2.17h-1.6c-.1 0-.18-.07-.2-.17l-.15-1.06c-.25-.1-.47-.23-.68-.39l-.99.4c-.09.03-.2 0-.25-.09l-.8-1.39c-.05-.08-.03-.19.05-.25l.84-.66c-.01-.13-.02-.26-.02-.39s.02-.27.04-.4l-.85-.66c-.08-.06-.1-.16-.05-.26l.8-1.38c.05-.09.15-.12.24-.09l1 .4c.2-.15.43-.29.67-.39L12 6.17c.02-.1.1-.17.2-.17h1.6c.1 0 .18.07.2.17l.15 1.06c.24.1.46.23.67.39l1-.4c.09-.03.2 0 .24.09l.8 1.38c.05.09.03.2-.05.26l-.85.66c.03.12.04.25.04.39z"/></svg>
<div id="t103" class="t" style="top:824.49px;font-size:24px;font-weight:400;-webkit-text-stroke:1.01px #cbd5e1;color:#cbd5e1;letter-spacing:0.484px;left:100.00px;">Practice Mode</div>
<svg class="b" style="left:41.50px;top:900.32px" width="36" height="36" viewBox="0 0 24 24"><path fill="#cbd5e1" d="M19 5h-2V3H7v2H5c-1.1 0-2 .9-2 2v1c0 2.55 1.92 4.63 4.39 4.94.63 1.5 1.98 2.63 3.61 2.96V19H7v2h10v-2h-4v-3.1c1.63-.33 2.98-1.46 3.61-2.96C19.08 12.63 21 10.55 21 8V7c0-1.1-.9-2-2-2zM5 8V7h2v3.82C5.84 10.4 5 9.3 5 8zm14 0c0 1.3-.84 2.4-2 2.82V7h2v1z"/></svg>
<div id="t104" class="t" style="top:914.50px;font-size:24px;font-weight:400;-webkit-text-stroke:1.01px #cbd5e1;color:#cbd5e1;letter-spacing:0.507px;left:100.00px;">Achievements</div>
<svg class="b" style="left:41.50px;top:990.33px" width="36" height="36" viewBox="0 0 24 24"><path fill="#cbd5e1" d="M4 7h16v2H4V7zm0 6h16v-2H4v2zm0 4h7v-2H4v2zm0 4h7v-2H4v2zm11.41-2.83L14 16.75l-1.41 1.41L15.41 21 20 16.42 18.58 15l-3.17 3.17zM4 3v2h16V3H4z"/></svg>
<div id="t105" class="t" style="top:1004.51px;font-size:24px;font-weight:400;-webkit-text-stroke:1.01px #cbd5e1;color:#cbd5e1;letter-spacing:0.487px;left:100.00px;">AI Grading</div>
<svg class="b" style="left:41.50px;top:1080.34px" width="36" height="36" viewBox="0 0 24 24"><path fill="#cbd5e1" d="M20 3H4c-1.1 0-2 .9-2 2v14c0 1.1.9 2 2 2h16c1.1 0 2-.9 2-2V5c0-1.1-.9-2-2-2zM10 17H5v-2h5v2zm0-4H5v-2h5v2zm0-4H5V7h5v2zm4.82 6L12 12.16l1.41-1.41 1.41 1.42L17.99 9l1.42 1.42L14.82 15z"/></svg>
<div id="t106" class="t" style="top:1094.52px;font-size:24px;font-weight:400;-webkit-text-stroke:1.01px #cbd5e1;color:#cbd5e1;letter-spacing:0.700px;left:100.00px;">Quality Analyzer</div>
<svg class="b" style="left:41.50px;top:1170.35px" width="36" height="36" viewBox="0 0 24 24"><path fill="#cbd5e1" d="M16 18l2.29-2.29-4.88-4.88-4 4L2 7.41 3.41 6l6 6 4-4 6.3 6.29L22 12v6z"/></svg>
<div id="t107" class="t" style="top:1184.53px;font-size:24px;font-weight:400;-webkit-text-stroke:1.01px #cbd5e1;color:#cbd5e1;letter-spacing:0.838px;left:100.00px;">Dropout Prediction</div>
<svg class="b" style="left:41.50px;top:1260.36px" width="36" height="36" viewBox="0 0 24 24"><path fill="#cbd5e1" d="M19 3H5c-1.1 0-2 .9-2 2v14c0 1.1.9 2 2 2h14c1.1 0 2-.9 2-2V5c0-1.1-.9-2-2-2zM9 17H7v-5h2v5zm4 0h-2v-3h2v3zm0-5h-2v-2h2v2zm4 5h-2V7h2v10z"/></svg>
<div id="t108" class="t" style="top:1274.54px;font-size:24px;font-weight:400;-webkit-text-stroke:1.01px #cbd5e1;color:#cbd5e1;letter-spacing:0.660px;left:100.00px;">Analytics</div>
<svg class="b" style="left:41.50px;top:1350.37px" width="36" height="36" viewBox="0 0 24 24"><path fill="#cbd5e1" d="M14 2H6c-1.1 0-1.99.9-1.99 2L4 20c0 1.1.89 2 1.99 2H18c1.1 0 2-.9 2-2V8l-6-6zm2 16H8v-2h8v2zm0-4H8v-2h8v2zm-3-5V3.5L18.5 9H13z"/></svg>
<div id="t109" class="t" style="top:1364.55px;font-size:24px;font-weight:400;-webkit-text-stroke:1.01px #cbd5e1;color:#cbd5e1;letter-spacing:0.596px;left:100.00px;">Reports</div>
<svg class="b" style="left:41.50px;top:1440.38px" width="36" height="36" viewBox="0 0 24 24"><path fill="#cbd5e1" d="M21 5c-1.11-.35-2.33-.5-3.5-.5-1.95 0-4.05.4-5.5 1.5-1.45-1.1-3.55-1.5-5.5-1.5S2.45 4.9 1 6v14.65c0 .25.25.5.5.5.1 0 .15-.05.25-.05C3.1 20.45 5.05 20 6.5 20c1.95 0 4.05.4 5.5 1.5 1.35-.85 3.8-1.5 5.5-1.5 1.65 0 3.35.3 4.75 1.05.1.05.15.05.25.05.25 0 .5-.25.5-.5V6c-.6-.45-1.25-.75-2-1zm0 13.5c-1.1-.35-2.3-.5-3.5-.5-1.7 0-4.15.65-5.5 1.5V8c1.35-.85 3.8-1.5 5.5-1.5 1.2 0 2.4.15 3.5.5v11.5zM17.5 10.5c.88 0 1.73.09 2.5.26V9.24c-.79-.15-1.64-.24-2.5-.24-1.7 0-3.24.29-4.5.83v1.66c1.13-.64 2.7-.99 4.5-.99zM13 12.49v1.66c1.13-.64 2.7-.99 4.5-.99.88 0 1.73.09 2.5.26V11.9c-.79-.15-1.64-.24-2.5-.24-1.7 0-3.24.3-4.5.83zM17.5 14.33c-1.7 0-3.24.29-4.5.83v1.66c1.13-.64 2.7-.99 4.5-.99.88 0 1.73.09 2.5.26v-1.52c-.79-.16-1.64-.24-2.5-.24z"/></svg>
<div id="t110" class="t" style="top:1454.56px;font-size:24px;font-weight:400;-webkit-text-stroke:1.01px #cbd5e1;color:#cbd5e1;letter-spacing:-0.093px;left:100.00px;">Courses</div>
<svg class="b" style="left:41.50px;top:1530.39px" width="36" height="36" viewBox="0 0 24 24"><path fill="#cbd5e1" d="M16 11c1.66 0 2.99-1.34 2.99-3S17.66 5 16 5c-1.66 0-3 1.34-3 3s1.34 3 3 3zm-8 0c1.66 0 2.99-1.34 2.99-3S9.66 5 8 5C6.34 5 5 6.34 5 8s1.34 3 3 3zm0 2c-2.33 0-7 1.17-7 3.5V19h14v-2.5c0-2.33-4.67-3.5-7-3.5zm8 0c-.29 0-.62.02-.97.05 1.16.84 1.97 1.97 1.97 3.45V19h6v-2.5c0-2.33-4.67-3.5-7-3.5z"/></svg>
<div id="t111" class="t" style="top:1544.57px;font-size:24px;font-weight:400;-webkit-text-stroke:1.01px #cbd5e1;color:#cbd5e1;letter-spacing:-0.189px;left:100.00px;">Users</div>
<svg class="b" style="left:41.50px;top:1620.40px" width="36" height="36" viewBox="0 0 24 24"><path fill="#cbd5e1" d="M12 2C6.48 2 2 6.48 2 12s4.48 10 10 10 10-4.48 10-10S17.52 2 12 2zm0 3c1.66 0 3 1.34 3 3s-1.34 3-3 3-3-1.34-3-3 1.34-3 3-3zm0 14.2c-2.5 0-4.71-1.28-6-3.22.03-1.99 4-3.08 6-3.08 1.99 0 5.97 1.09 6 3.08-1.29 1.94-3.5 3.22-6 3.22z"/></svg>
<div id="t112" class="t" style="top:1634.58px;font-size:24px;font-weight:400;-webkit-text-stroke:1.01px #cbd5e1;color:#cbd5e1;letter-spacing:0.781px;left:100.00px;">My Profile</div>
<svg class="b" style="left:41.50px;top:1710.41px" width="36" height="36" viewBox="0 0 24 24"><path fill="#cbd5e1" d="M19.14 12.94c.04-.3.06-.61.06-.94 0-.32-.02-.64-.07-.94l2.03-1.58c.18-.14.23-.41.12-.61l-1.92-3.32c-.12-.22-.37-.29-.59-.22l-2.39.96c-.5-.38-1.03-.7-1.62-.94l-.36-2.54c-.04-.24-.24-.41-.48-.41h-3.84c-.24 0-.43.17-.47.41l-.36 2.54c-.59.24-1.13.57-1.62.94l-2.39-.96c-.22-.08-.47 0-.59.22L2.74 8.87c-.12.21-.08.47.12.61l2.03 1.58c-.05.3-.09.63-.09.94s.02.64.07.94l-2.03 1.58c-.18.14-.23.41-.12.61l1.92 3.32c.12.22.37.29.59.22l2.39-.96c.5.38 1.03.7 1.62.94l.36 2.54c.05.24.24.41.48.41h3.84c.24 0 .44-.17.47-.41l.36-2.54c.59-.24 1.13-.56 1.62-.94l2.39.96c.22.08.47 0 .59-.22l1.92-3.32c.12-.22.07-.47-.12-.61l-2.01-1.58zM12 15.6c-1.98 0-3.6-1.62-3.6-3.6s1.62-3.6 3.6-3.6 3.6 1.62 3.6 3.6-1.62 3.6-3.6 3.6z"/></svg>
<div id="t113" class="t" style="top:1724.59px;font-size:24px;font-weight:400;-webkit-text-stroke:1.01px #cbd5e1;color:#cbd5e1;letter-spacing:0.670px;left:100.00px;">Settings</div>
<svg class="b" style="left:41.50px;top:1800.42px" width="36" height="36" viewBox="0 0 24 24"><path fill="#cbd5e1" d="M17 11c.34 0 .67.04 1 .09V6.27L10.5 3 3 6.27v4.91c0 4.54 3.2 8.79 7.5 9.82.55-.13 1.08-.32 1.6-.55-.69-.98-1.1-2.17-1.1-3.45 0-3.31 2.69-6 6-6zM17 13c-2.21 0-4 1.79-4 4s1.79 4 4 4 4-1.79 4-4-1.79-4-4-4zm0 1.38c.62 0 1.12.51 1.12 1.12s-.51 1.12-1.12 1.12-1.12-.51-1.12-1.12.5-1.12 1.12-1.12zm0 5.37c-.93 0-1.74-.46-2.24-1.17.05-.72 1.51-1.08 2.24-1.08s2.19.36 2.24 1.08c-.5.71-1.31 1.17-2.24 1.17z"/></svg>
<div id="t114" class="t" style="top:1814.60px;font-size:24px;font-weight:400;-webkit-text-stroke:1.01px #cbd5e1;color:#cbd5e1;letter-spacing:0.433px;left:100.00px;">Admin Panel</div>
<div class="b" style="left:448.00px;top:0.00px;width:3392.00px;height:112.00px;background:linear-gradient(100deg,#1f2536 0%,#252b3d 40%,#262e54 72%,#27336b 100%);"></div>
<div class="b" style="left:448.00px;top:0.00px;width:3392.00px;height:112.00px;background:linear-gradient(180deg,rgba(255,255,255,0.04) 0%,rgba(255,255,255,0) 60%,rgba(0,0,0,0.07) 100%);"></div>
<div class="b" style="left:448.00px;top:112.00px;width:3392.00px;height:2.00px;background:#ffffff;"></div>
<svg class="b" style="left:503.50px;top:26.00px" width="48" height="48" viewBox="0 0 24 24"><path fill="#cbd5e1" d="M3 18h18v-2H3v2zm0-5h18v-2H3v2zm0-7v2h18V6H3z"/></svg>
<div class="b" style="left:3071.00px;top:22.50px;width:248.50px;height:66.50px;box-sizing:border-box;border-radius:14px;border:1.5px solid rgba(96,130,220,0.45);background:linear-gradient(90deg,#22408f 0%,#1e3a84 55%,#1c3373 100%);box-shadow:0 6px 14px rgba(0,0,0,0.25);"></div>
<svg class="b" style="left:3098.00px;top:40.00px" width="28" height="28" viewBox="0 0 24 24"><path fill="#ffffff" d="M19 13h-6v6h-2v-6H5v-2h6V5h2v6h6v2z"/></svg>
<div id="t115" class="t" style="top:42.83px;font-size:25px;font-weight:400;-webkit-text-stroke:1.05px #ffffff;color:#ffffff;letter-spacing:0.170px;left:3138.00px;">Quick Actions</div>
<svg class="b" style="left:3360.50px;top:26.00px" width="50" height="50" viewBox="0 0 24 24"><path fill="#cbd5e1" d="M20 3h-1V1h-2v2H7V1H5v2H4c-1.1 0-2 .9-2 2v16c0 1.1.9 2 2 2h16c1.1 0 2-.9 2-2V5c0-1.1-.9-2-2-2zm0 18H4V10h16v11zm0-13H4V5h16v3z"/></svg>
<svg class="b" style="left:3464.00px;top:25.50px" width="50" height="50" viewBox="0 0 24 24"><path fill="#cbd5e1" d="M12 22c1.1 0 2-.9 2-2h-4c0 1.1.9 2 2 2zm6-6v-5c0-3.07-1.64-5.64-4.5-6.32V4c0-.83-.67-1.5-1.5-1.5s-1.5.67-1.5 1.5v.68C7.63 5.36 6 7.92 6 11v5l-2 2v1h16v-1l-2-2zm-2 1H8v-6c0-2.48 1.51-4.5 4-4.5s4 2.02 4 4.5v6z"/></svg>
<div class="b" style="left:3496.00px;top:8.00px;width:35.00px;height:35.00px;border-radius:50%;background:#9f2c42;"></div>
<div id="t116" class="t" style="top:16.07px;font-size:20px;font-weight:700;color:#d4cdd3;left:3513.50px;transform-origin:0 0;transform: translateX(-50%);">4</div>
<div class="b" style="left:3572.00px;top:25.00px;width:64.00px;height:64.00px;box-sizing:border-box;border-radius:50%;background:#5d6785;"></div>
<svg class="b" style="left:3576px;top:29px" width="56" height="56" viewBox="0 0 56 56">
<defs><clipPath id="avc"><circle cx="28" cy="28" r="28"/></clipPath><radialGradient id="avbg" cx="0.5" cy="0.4" r="0.7"><stop offset="0" stop-color="#d3d4da"/><stop offset="1" stop-color="#b9bbc4"/></radialGradient></defs>
<g clip-path="url(#avc)">
<rect width="56" height="56" fill="url(#avbg)"/>
<path d="M12 57 C14 50 21 47 29 47 C37 47 42 50 45 57 Z" fill="#d6dbe3"/>
<path d="M20 47 L29 52 L37 46 L35 56 L22 56 Z" fill="#aeb6c2"/>
<rect x="24" y="39" width="11" height="10" fill="#cf9f85"/>
<ellipse cx="19.5" cy="31" rx="2.6" ry="4" fill="#d4a48a"/>
<ellipse cx="30" cy="30" rx="10.5" ry="14.5" fill="#e2b59b"/>
<path d="M17.5 31 C15.5 16 22 7.5 31 7.5 C40 7.5 44.5 15 42.5 27 C41 21 37.5 17.5 32 18 C26 18.5 21.5 22 20 32 Z" fill="#35251e"/>
<path d="M24 27.5 h4.5 M32 27.5 h4.5" stroke="#3a2a22" stroke-width="1.3"/>
<ellipse cx="26.3" cy="30.3" rx="1.5" ry="1" fill="#2e2320"/><ellipse cx="34.3" cy="30.3" rx="1.5" ry="1" fill="#2e2320"/>
<path d="M27 38.5 Q30 39.5 33 38.5" stroke="#a86f5c" stroke-width="1" fill="none"/>
</g></svg>
<div id="t117" class="t" style="top:29.26px;font-size:24.5px;font-weight:400;-webkit-text-stroke:1.03px #ffffff;color:#ffffff;letter-spacing:0.211px;left:3653.50px;">John Smith</div>
<div id="t118" class="t" style="top:62.22px;font-size:21px;font-weight:400;color:#cbd5e1;letter-spacing:0.132px;left:3655.00px;">Manager</div>
<script>(function(){var w=window.innerWidth;if(w&&Math.abs(w-3840)>2){document.documentElement.style.zoom=w/3840;}})();</script>
</body></html>
